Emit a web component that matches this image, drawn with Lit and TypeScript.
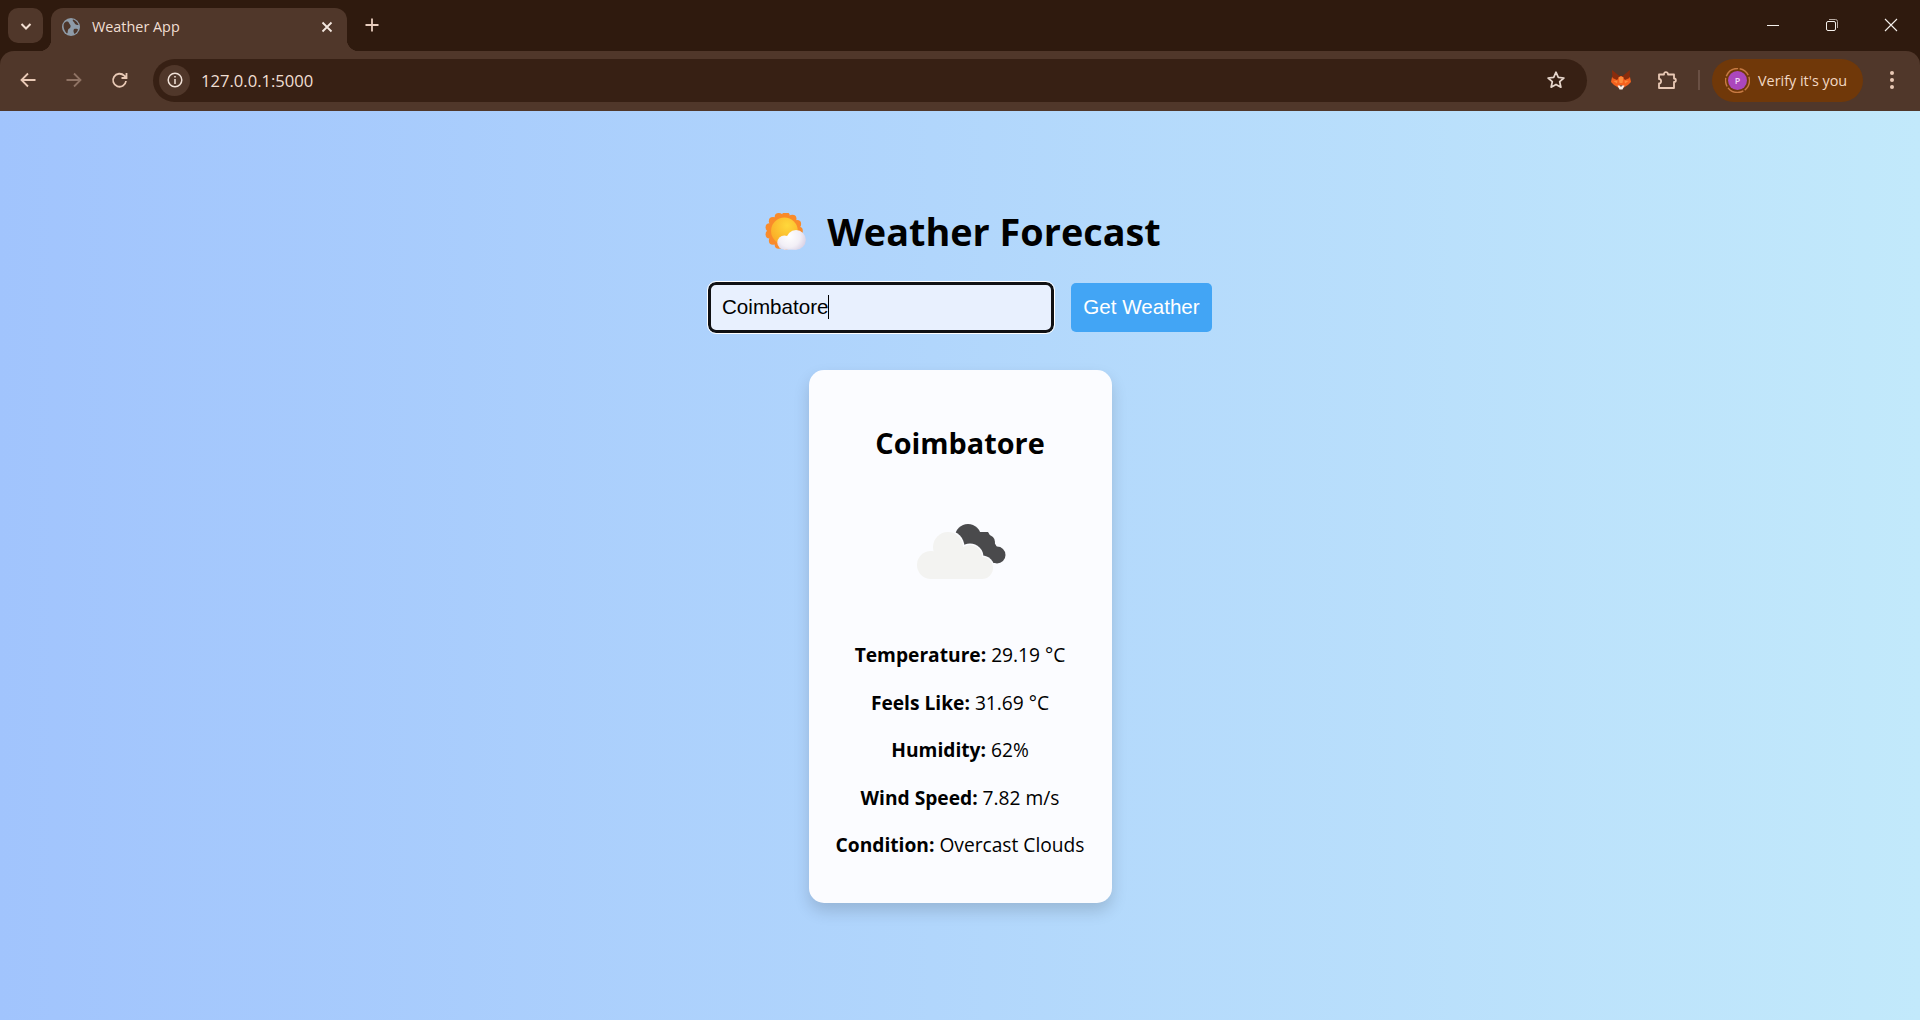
import { LitElement, html, css, svg } from 'lit';
import { customElement, property } from 'lit/decorators.js';

const sunPetals = Array.from({ length: 13 }, (_, i) => {
  const a = (i / 13) * Math.PI * 2;
  return svg`<circle cx=${20 + Math.cos(a) * 16.5} cy=${20 + Math.sin(a) * 16.5} r="4.6" fill="#f98b2b"></circle>`;
});

@customElement('browser-chrome')
export class BrowserChrome extends LitElement {
  static styles = css`
    :host {
      display: block;
      background: #2f1a0e;
      font-family: 'Open Sans', 'Noto Sans', sans-serif;
      color: #f0dfd3;
    }
    svg {
      display: block;
      flex: none;
    }
    .strip {
      height: 51px;
      display: flex;
      align-items: flex-end;
      padding-left: 8px;
    }
    .tab-list {
      width: 35px;
      height: 35px;
      margin-bottom: 8px;
      border-radius: 10px;
      background: #50372a;
      display: flex;
      align-items: center;
      justify-content: center;
    }
    .tab {
      position: relative;
      width: 296px;
      height: 43px;
      margin-left: 8px;
      padding: 0 14px 6px 11px;
      box-sizing: border-box;
      border-radius: 12px 12px 0 0;
      background: #50372a;
      display: flex;
      align-items: center;
      font-size: 14.400px;
    }
    .tab::before,
    .tab::after {
      content: '';
      position: absolute;
      bottom: 0;
      width: 12px;
      height: 12px;
    }
    .tab::before {
      left: -12px;
      background: radial-gradient(circle at 0 0, transparent 12px, #50372a 12.5px);
    }
    .tab::after {
      right: -12px;
      background: radial-gradient(circle at 100% 0, transparent 12px, #50372a 12.5px);
    }
    .tab-title {
      flex: 1;
      margin-left: 12px;
    }
    .new-tab {
      margin: 0 0 19px 18px;
    }
    .window {
      margin-left: auto;
      display: flex;
      align-self: flex-start;
    }
    .window span {
      width: 59px;
      height: 50px;
      display: flex;
      align-items: center;
      justify-content: center;
    }
    .bar {
      height: 60px;
      background: #50372a;
      border-radius: 14px 14px 0 0;
      display: flex;
      align-items: center;
      padding: 0 25px 2px 18px;
      box-sizing: border-box;
    }
    .nav {
      display: flex;
      gap: 26px;
    }
    .url {
      flex: 1;
      height: 43px;
      margin-left: 23px;
      border-radius: 22px;
      background: #372014;
      display: flex;
      align-items: center;
      padding: 0 21px 0 6px;
      font-size: 16.600px;
    }
    .info {
      width: 31px;
      height: 31px;
      border-radius: 50%;
      background: #50372a;
      display: flex;
      align-items: center;
      justify-content: center;
    }
    .address {
      flex: 1;
      margin-left: 11px;
    }
    .tools {
      display: flex;
      align-items: center;
      margin-left: 24px;
    }
    .puzzle {
      margin-left: 25px;
    }
    .sep {
      width: 2px;
      height: 20px;
      margin: 0 12px 0 20px;
      background: #6a5044;
    }
    .verify {
      width: 151px;
      height: 43px;
      box-sizing: border-box;
      padding-left: 13px;
      border-radius: 22px;
      background: #703809;
      display: flex;
      align-items: center;
      gap: 8px;
      font-size: 14.400px;
      color: #f3d9c4;
    }
    .avatar {
      position: relative;
      width: 25px;
      height: 25px;
    }
    .avatar b {
      position: absolute;
      inset: 0;
      display: flex;
      align-items: center;
      justify-content: center;
      font-size: 9px;
      font-weight: 600;
      color: #f2d9f5;
    }
    .dots {
      margin-left: 26px;
    }
  `;

  render() {
    return html`
      <div class="strip">
        <div class="tab-list">
          <svg width="14" height="14" viewBox="0 0 14 14" fill="none" stroke="#f3dfd2" stroke-width="2"><path d="M2.500 5l4.500 4.500L11.500 5"/></svg>
        </div>
        <div class="tab">
          <svg width="18" height="18" viewBox="0 0 18 18"><circle cx="9" cy="9" r="9" fill="#8e9ba8"/><path d="M2 5.500C4 3 6 3 7 5s2 2 1.500 4-2 1-2.500 3 0 3-1 3.500C3 14 0.500 9 2 5.500zM11 1.500c2 .5 5 3 5.500 5.500-2 0-3.500-.5-4-2s-2.500-2-1.500-3.500zM12 11c1.500-.5 3.500-.5 4 .5-.5 2-2 3.500-3.500 4.500-1-1.500-1.500-3.500-.5-5z" fill="#4d3529"/></svg>
          <span class="tab-title">Weather App</span>
          <svg width="12" height="12" viewBox="0 0 12 12" stroke="#f3e7df" stroke-width="1.800"><path d="M1.500 1.500l9 9M10.500 1.500l-9 9"/></svg>
        </div>
        <svg class="new-tab" width="14" height="14" viewBox="0 0 14 14" stroke="#e8cdbd" stroke-width="1.800"><path d="M7 .5v13M.5 7h13"/></svg>
        <div class="window">
          <span><svg width="14" height="14" viewBox="0 0 14 14" stroke="#f5f0ec"><path d="M1 7.500h12"/></svg></span>
          <span><svg width="14" height="14" viewBox="0 0 14 14" fill="none" stroke="#f5f0ec"><rect x="1.500" y="3.500" width="9" height="9" rx="1.500"/><path d="M4 1.500h6.500a2 2 0 0 1 2 2V10" stroke="#b9aba2"/></svg></span>
          <span><svg width="14" height="14" viewBox="0 0 14 14" stroke="#f5f0ec" stroke-width="1.100"><path d="M1 1l12 12M13 1L1 13"/></svg></span>
        </div>
      </div>
      <div class="bar">
        <div class="nav">
          <svg width="20" height="20" viewBox="0 0 20 20" fill="none" stroke="#e9c9b5" stroke-width="1.800"><path d="M17.500 10H3.500M10 3.500L3.500 10l6.500 6.500"/></svg>
          <svg width="20" height="20" viewBox="0 0 20 20" fill="none" stroke="#8f7364" stroke-width="1.800"><path d="M2.500 10h14M10 3.500l6.500 6.500-6.500 6.500"/></svg>
          <svg width="20" height="20" viewBox="0 0 20 20" fill="none" stroke="#e9c9b5" stroke-width="1.800"><path d="M16 11a6.500 6.500 0 1 1-1.800-5.300L16.500 8M16.500 3v5h-5"/></svg>
        </div>
        <div class="url">
          <div class="info">
            <svg width="18" height="18" viewBox="0 0 18 18" fill="none" stroke="#f1e2d8" stroke-width="1.500"><circle cx="9" cy="9" r="6.800"/><path d="M9 8v5M9 5v1.500"/></svg>
          </div>
          <span class="address">127.0.0.1:5000</span>
          <svg width="20" height="20" viewBox="0 0 20 20" fill="none" stroke="#e6d6cc" stroke-width="1.700" stroke-linejoin="round"><path d="M10 2.200l2.300 5.200 5.600.6-4.200 3.700 1.200 5.500L10 14.400l-4.900 2.800 1.200-5.500L2.100 8l5.600-.6z"/></svg>
        </div>
        <div class="tools">
          <svg width="20" height="20" viewBox="0 0 20 20">
            <path d="M1 7l5-1h8l5 1 1 5-3 3-5 3H8l-5-3-3-3z" fill="#f4611e"/>
            <path d="M1 0l8 6.500L6 10 1.500 8zM19 0l-8 6.500L14 10l4.500-2z" fill="#8a2c0c"/>
            <path d="M7.500 7h5l-1 6h-3zM2.500 11l4-.5L6 13.500zM17.500 11l-4-.5.5 3z" fill="#fb8a3c"/>
            <path d="M6.500 15.500h7L11.500 19.500h-3z" fill="#f6eee8"/>
            <path d="M8.500 15.500h3l-1.500 1.200z" fill="#2a1a14"/>
          </svg>
          <svg class="puzzle" width="22" height="22" viewBox="0 0 22 22" fill="none" stroke="#e9c9b5" stroke-width="1.800" stroke-linejoin="round"><path d="M3 5.500h5c-.5-3 4-3.500 4 0h6v4c2.500 0 2.500 3.500 0 3.500v6H3v-4.500c2.800.4 2.800-4.700 0-4.500z"/></svg>
          <span class="sep"></span>
          <div class="verify">
            <div class="avatar">
              <svg width="25" height="25" viewBox="0 0 25 25"><circle cx="12.500" cy="12.500" r="12" fill="none" stroke="#c77a43" stroke-width="1.400" stroke-dasharray="11 1.600 17 1.600 9 1.600 15 1.600"/><circle cx="12.500" cy="12.500" r="9.500" fill="#ab47bc"/></svg>
              <b>P</b>
            </div>
            <span>Verify it's you</span>
          </div>
          <svg class="dots" width="6" height="20" viewBox="0 0 6 20" fill="#e9c9b5"><circle cx="3" cy="3" r="2"/><circle cx="3" cy="10" r="2"/><circle cx="3" cy="17" r="2"/></svg>
        </div>
      </div>
    `;
  }
}

@customElement('weather-card')
export class WeatherCard extends LitElement {
  @property() city = 'Coimbatore';

  static styles = css`
    :host {
      display: block;
      width: 303px;
      box-sizing: border-box;
      padding: 53px 5px 22px;
      border-radius: 15px;
      background: #fbfcff;
      box-shadow: 0 8px 16px rgba(0, 0, 0, 0.15);
      text-align: center;
      font-family: 'Open Sans', 'Noto Sans', sans-serif;
      color: #000;
    }
    h2 {
      margin: 0 0 39px;
      font-size: 28.800px;
      line-height: 40px;
      font-weight: 700;
    }
    svg {
      display: block;
      margin: 0 auto 41px;
    }
    p {
      margin: 0 0 23.500px;
      font-size: 19.200px;
      line-height: 24px;
    }
    strong {
      font-weight: 700;
    }
  `;

  private rows = [
    ['Temperature:', '29.19 °C'],
    ['Feels Like:', '31.69 °C'],
    ['Humidity:', '62%'],
    ['Wind Speed:', '7.82 m/s'],
    ['Condition:', 'Overcast Clouds'],
  ];

  render() {
    return html`
      <h2>${this.city}</h2>
      <svg width="100" height="100" viewBox="0 0 100 100">
        <g fill="#4a4a4c">
          <circle cx="58" cy="35" r="13"/>
          <circle cx="78" cy="40" r="7"/>
          <circle cx="87" cy="53" r="8.500"/>
          <path d="M58 30h20l9 15v16H65z"/>
        </g>
        <g fill="#fbfcff">
          <circle cx="38" cy="45" r="16.500"/>
          <circle cx="60" cy="55" r="13.500"/>
          <circle cx="72" cy="66" r="12.500"/>
        </g>
        <g fill="#f3f3f1">
          <circle cx="38" cy="45" r="15"/>
          <circle cx="60" cy="55" r="12"/>
          <circle cx="72" cy="66" r="11"/>
          <circle cx="21" cy="63" r="14"/>
          <path d="M30 48h25v12h17v17H21V60h9z"/>
        </g>
      </svg>
      ${this.rows.map(([label, value]) => html`<p><strong>${label}</strong> ${value}</p>`)}
    `;
  }
}

@customElement('app-root')
export class AppRoot extends LitElement {
  static styles = css`
    :host {
      display: flex;
      flex-direction: column;
      height: 1020px;
      overflow: hidden;
    }
    .page {
      flex: 1;
      background: linear-gradient(to right, #a1c4fd, #c2e9fb);
      display: flex;
      flex-direction: column;
      align-items: center;
      padding-top: 94px;
    }
    h1 {
      margin: 0;
      display: flex;
      align-items: center;
      gap: 18px;
      height: 52px;
      font: 700 37.800px 'Open Sans', 'Noto Sans', sans-serif;
      color: #000;
    }
    h1 svg {
      margin-top: 6px;
    }
    form {
      margin: 25px 0 0;
      display: flex;
      align-items: center;
      gap: 17px;
      font: 20.600px 'Liberation Sans', Arial, sans-serif;
    }
    .field {
      width: 346px;
      height: 51px;
      box-sizing: border-box;
      padding: 0 11px 1px;
      border: 3px solid #101114;
      outline: 1px solid #fff;
      border-radius: 8px;
      background: #e8f0fe;
      display: flex;
      align-items: center;
      color: #000;
    }
    .caret {
      width: 1px;
      height: 24px;
      background: #000;
    }
    button {
      width: 141px;
      height: 49px;
      padding: 0 0 1px;
      border: none;
      border-radius: 5px;
      background: #42a5f5;
      color: #fff;
      font: inherit;
    }
    weather-card {
      margin-top: 37px;
    }
  `;

  render() {
    return html`
      <browser-chrome></browser-chrome>
      <main class="page">
        <h1>
          <svg width="50" height="43" viewBox="-8 0 56 48">
            <defs>
              <radialGradient id="sun" cx="0.6" cy="0.3" r="0.8">
                <stop offset="0" stop-color="#ffd83b"/>
                <stop offset="1" stop-color="#f9a825"/>
              </radialGradient>
              <radialGradient id="puff" gradientUnits="userSpaceOnUse" cx="26" cy="26" r="20">
                <stop offset="0" stop-color="#ffffff"/>
                <stop offset="0.6" stop-color="#f2eff6"/>
                <stop offset="1" stop-color="#d6cfe4"/>
              </radialGradient>
            </defs>
            ${sunPetals}
            <circle cx="20" cy="20" r="17" fill="#f98b2b"/>
            <circle cx="20.500" cy="20" r="15" fill="url(#sun)"/>
            <g fill="url(#puff)">
              <circle cx="33.500" cy="30" r="11"/>
              <circle cx="20.500" cy="33" r="8"/>
              <path d="M20 28h14v13H20z"/>
            </g>
          </svg>
          <span>Weather Forecast</span>
        </h1>
        <form>
          <div class="field" role="textbox"><span>Coimbatore</span><span class="caret"></span></div>
          <button type="button">Get Weather</button>
        </form>
        <weather-card></weather-card>
      </main>
    `;
  }
}
